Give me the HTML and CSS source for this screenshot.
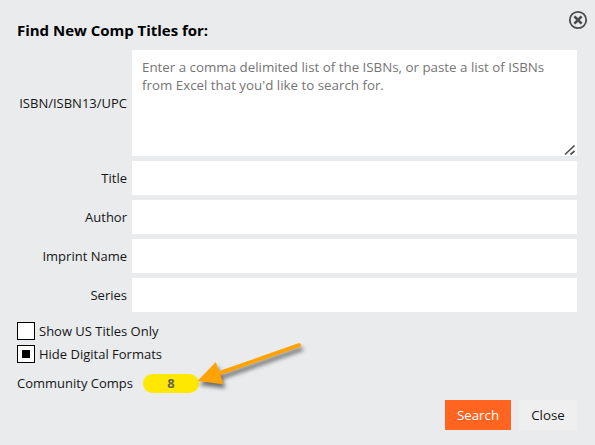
FILE: index.html
```html
<!DOCTYPE html>
<html lang="en">
<head>
<meta charset="utf-8">
<title>Find New Comp Titles</title>
<link rel="stylesheet" href="styles.css">
</head>
<body>
<main class="dialog">
  <header class="header">
    <h1 class="title">Find New Comp Titles for:</h1>
    <svg class="close-icon" width="20" height="20" viewBox="0 0 20 20" fill="none" stroke="#4a4a4a">
      <circle cx="10" cy="10" r="8.2" stroke-width="1.8"/>
      <path d="M6.4 6.4 13.6 13.6M13.6 6.4 6.4 13.6" stroke-width="2.7"/>
    </svg>
  </header>
  <form class="fields">
    <label class="label label-isbn" for="isbn">ISBN/ISBN13/UPC</label>
    <div class="area-wrap">
      <textarea class="area" id="isbn" placeholder="Enter a comma delimited list of the ISBNs, or paste a list of ISBNs from Excel that you'd like to search for."></textarea>
      <svg class="grip" width="12" height="12" viewBox="0 0 12 12" stroke="#505050" stroke-width="1.7"><path d="M1 10.5 10.5 1.5M6.5 10.5 10.5 7"/></svg>
    </div>
    <label class="label" for="t">Title</label><input class="input" id="t">
    <label class="label" for="a">Author</label><input class="input" id="a">
    <label class="label" for="i">Imprint Name</label><input class="input" id="i">
    <label class="label" for="s">Series</label><input class="input" id="s">
  </form>
  <section class="options">
    <div class="option"><span class="box"></span><span class="us">Show US Titles Only</span></div>
    <div class="option"><span class="box checked"></span><span class="digital">Hide Digital Formats</span></div>
  </section>
  <div class="community">
    <span class="community-label">Community Comps</span>
    <span class="pill">8</span>
    <svg class="arrow" width="125" height="60" viewBox="190 335 125 60">
      <g class="arrow-shape" fill="#ffa305">
        <path d="M217 374 299 345.2" stroke="#ffa305" stroke-width="4" stroke-linecap="round"/>
        <path d="M197.5 381 215.8 362 223.4 384.2Z"/>
      </g>
    </svg>
  </div>
  <footer class="actions">
    <button class="button search">Search</button>
    <button class="button close">Close</button>
  </footer>
</main>
</body>
</html>
```

FILE: styles.css
```css
* { box-sizing: border-box; }
body {
  margin: 0;
  background: #e9ebec;
  color: #161616;
  font: 13px/18px "Open Sans", sans-serif;
}
.dialog { width: 595px; height: 445px; padding: 10px 18px 0 17px; overflow: hidden; }
.header { position: relative; height: 40px; padding-top: 10px; }
.title { margin: 0; color: #000; font-size: 15px; font-weight: 700; line-height: 20px; letter-spacing: -.02px; }
.close-icon { position: absolute; top: 0; right: -11px; }
.fields {
  display: grid;
  grid-template-columns: 110px 445px;
  grid-template-rows: 106px repeat(4, 34px);
  row-gap: 5px;
  column-gap: 5px;
}
.label { align-self: center; text-align: right; }
.area-wrap { position: relative; }
.area, .input { display: block; width: 100%; height: 100%; border: 0; padding: 8px 10px; background: #fff; font: inherit; outline: 0; border-radius: 0; }
.area { resize: none; overflow: hidden; font-size: 13.3333px; }
.area::placeholder { color: #757575; opacity: 1; }
.grip { position: absolute; right: 1px; bottom: 0; fill: none; }
.options { display: grid; gap: 5px; margin-top: 10px; }
.option { display: flex; align-items: center; height: 18px; gap: 4px; }
.box { display: grid; place-items: center; width: 18px; height: 18px; border: 1px solid #000; background: #fff; }
.checked::after { content: ""; width: 8px; height: 8px; background: #000; }
.community { position: relative; display: flex; align-items: center; height: 19px; margin-top: 11px; }
.community-label { width: 126px; height: 19px; line-height: 18px; }
.pill { width: 56px; height: 19px; border-radius: 10px; background: #ffe800; color: #6b6450; font-weight: 700; line-height: 19px; text-align: center; }
.arrow { position: absolute; left: 173px; top: -39px; }
.arrow-shape { filter: drop-shadow(2px 4px 2px rgba(0, 0, 0, .55)); }
.actions { display: flex; justify-content: flex-end; gap: 8px; margin-top: 7px; }
.button { height: 30px; border: 0; padding: 0; font: inherit; }
.search { width: 66px; background: #ff6420; color: #fff; font-size: 13.3333px; }
.close { width: 58px; background: #efefef; color: #161616; font-size: 13.3333px; }
```
